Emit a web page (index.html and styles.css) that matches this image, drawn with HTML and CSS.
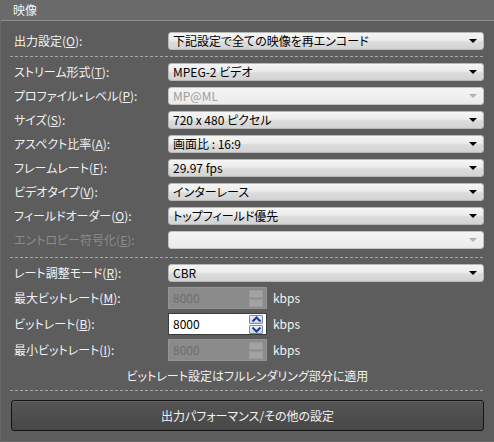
FILE: index.html
```html
<!DOCTYPE html>
<html lang="ja">
<head>
<meta charset="utf-8">
<title>映像</title>
<link rel="stylesheet" href="styles.css">
</head>
<body>
<div class="panel">
  <div class="header">映像</div>
  <div class="body">
    <div class="row">
      <span class="label">出力設定(<u>O</u>):</span>
      <div class="select"><span class="val">下記設定で全ての映像を再エンコード</span><span class="arrow"></span></div>
    </div>
    <div class="sep"></div>
    <div class="row">
      <span class="label">ストリーム形式(<u>T</u>):</span>
      <div class="select"><span class="val">MPEG-2 ビデオ</span><span class="arrow"></span></div>
    </div>
    <div class="row">
      <span class="label">プロファイル・レベル(<u>P</u>):</span>
      <div class="select disabled"><span class="val">MP@ML</span><span class="arrow"></span></div>
    </div>
    <div class="row">
      <span class="label">サイズ(<u>S</u>):</span>
      <div class="select"><span class="val">720 x 480 ピクセル</span><span class="arrow"></span></div>
    </div>
    <div class="row">
      <span class="label">アスペクト比率(<u>A</u>):</span>
      <div class="select"><span class="val">画面比 : 16:9</span><span class="arrow"></span></div>
    </div>
    <div class="row">
      <span class="label">フレームレート(<u>F</u>):</span>
      <div class="select"><span class="val">29.97 fps</span><span class="arrow"></span></div>
    </div>
    <div class="row">
      <span class="label">ビデオタイプ(<u>V</u>):</span>
      <div class="select"><span class="val">インターレース</span><span class="arrow"></span></div>
    </div>
    <div class="row">
      <span class="label">フィールドオーダー(<u>O</u>):</span>
      <div class="select"><span class="val">トップフィールド優先</span><span class="arrow"></span></div>
    </div>
    <div class="row">
      <span class="label dim">エントロピー符号化(<u>E</u>):</span>
      <div class="select disabled"><span class="val"></span><span class="arrow"></span></div>
    </div>
    <div class="sep sep2"></div>
    <div class="row">
      <span class="label">レート調整モード(<u>R</u>):</span>
      <div class="select"><span class="val">CBR</span><span class="arrow"></span></div>
    </div>
    <div class="row spinrow">
      <span class="label">最大ビットレート(<u>M</u>):</span>
      <div class="spin disabled"><span class="num">8000</span><span class="btns"><span class="b"></span><span class="b"></span></span></div>
      <span class="unit">kbps</span>
    </div>
    <div class="row spinrow">
      <span class="label">ビットレート(<u>B</u>):</span>
      <div class="spin active"><span class="num">8000</span><span class="btns">
        <span class="b"><svg width="11" height="7" viewBox="0 0 11 7"><path d="M1.5 5.5 L5.5 1.5 L9.5 5.5" fill="none" stroke="#1d3f8a" stroke-width="2"/></svg></span>
        <span class="b"><svg width="11" height="7" viewBox="0 0 11 7"><path d="M1.5 1.5 L5.5 5.5 L9.5 1.5" fill="none" stroke="#1d3f8a" stroke-width="2"/></svg></span>
      </span></div>
      <span class="unit">kbps</span>
    </div>
    <div class="row spinrow">
      <span class="label">最小ビットレート(<u>I</u>):</span>
      <div class="spin disabled"><span class="num">8000</span><span class="btns"><span class="b"></span><span class="b"></span></span></div>
      <span class="unit">kbps</span>
    </div>
    <div class="note">ビットレート設定はフルレンダリング部分に適用</div>
    <div class="sep sep3"></div>
    <div class="button">出力パフォーマンス/その他の設定</div>
  </div>
</div>
</body>
</html>
```

FILE: styles.css
```css
* { box-sizing: border-box; }
html, body {
  margin: 0;
  padding: 0;
  background: #5d5d5d;
}
body {
  font-family: "Noto Sans CJK JP", "Liberation Sans", sans-serif;
  font-size: 12px;
  color: #f2f2f2;
  font-feature-settings: "palt";
}
.panel {
  width: 494px;
  height: 442px;
  background: #5d5d5d;
  border-left: 1px solid #6a6a6a;
  border-bottom: 1px solid #6a6a6a;
}
.header {
  height: 21px;
  background: #6a6a6a;
  border-bottom: 1px solid #8e8e8e;
  padding-left: 12px;
  line-height: 20px;
}
.body {
  padding: 8px 9px 0 9px;
}
.row {
  display: flex;
  align-items: center;
  height: 24px;
  padding-left: 4px;
  padding-right: 1px;
}
.label {
  width: 154px;
  flex: none;
  white-space: nowrap;
  line-height: 14px;
}
.label.dim { color: #8c8c8c; }
u { text-decoration-thickness: 1px; text-underline-offset: 1px; }
.select {
  flex: 1;
  height: 18px;
  display: flex;
  align-items: center;
  justify-content: space-between;
  padding: 0 6px 0 4px;
  border: 1px solid #b8b8b8;
  border-radius: 3px;
  background: linear-gradient(#f6f6f6 0%, #ececec 45%, #dcdcdc 55%, #d3d3d3 100%);
  color: #000;
}
.select .val { line-height: 14px; white-space: nowrap; }
.arrow {
  width: 0;
  height: 0;
  border-left: 4px solid transparent;
  border-right: 4px solid transparent;
  border-top: 4px solid #000;
}
.select.disabled {
  background: linear-gradient(#f4f4f4, #ebebeb);
  border-color: #c4c4c4;
  color: #a0a0a0;
}
.select.disabled .arrow { border-top-color: #b2b2b2; }
.sep {
  height: 1px;
  margin: 3px 0 3px 0;
  background-image: linear-gradient(to right, #a6a6a6 3px, transparent 3px);
  background-size: 5px 1px;
  background-repeat: repeat-x;
}
.sep2 { margin: 5px 0 3px 0; }
.sep3 { margin: 0 0 9px 0; }
.spinrow { height: 26px; }
.spin {
  width: 99px;
  height: 22px;
  display: flex;
  align-items: center;
  justify-content: space-between;
  padding: 0 3px 0 4px;
  flex: none;
}
.spin.disabled {
  background: #8b8b8b;
  border: 1px solid #949494;
  color: #6e6e6e;
}
.spin.active {
  background: #fff;
  border: 1px solid #3c3c3c;
  color: #000;
}
.num { line-height: 14px; }
.btns {
  display: flex;
  flex-direction: column;
  gap: 1px;
}
.b {
  width: 14px;
  height: 8px;
  display: flex;
  align-items: center;
  justify-content: center;
}
.spin.disabled .b {
  background: #a3a3a3;
  border: 1px solid #9a9a9a;
}
.spin.active .b {
  background: linear-gradient(#eef2f8, #c9d3e4);
  border: 1px solid #7b8aa6;
  border-radius: 1px;
  height: 9px;
}
.unit {
  margin-left: 6px;
  line-height: 14px;
}
.note {
  height: 27px;
  line-height: 26px;
  text-align: center;
}
.button {
  height: 31px;
  margin: 0 0 0 1px;
  width: 473px;
  border: 1px solid #141414;
  border-radius: 3px;
  background: linear-gradient(#555555, #474747);
  box-shadow: inset 0 1px 0 #666;
  text-align: center;
  line-height: 29px;
}
```
